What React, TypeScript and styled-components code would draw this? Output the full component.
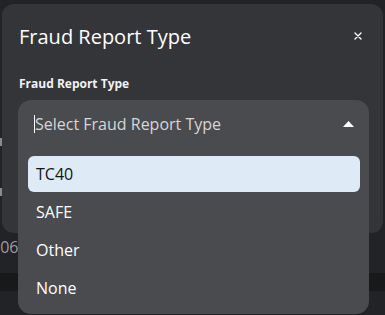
import styled, { createGlobalStyle } from 'styled-components'

const GlobalStyle = createGlobalStyle`
  html, body {
    margin: 0;
    padding: 0;
    background: #222326;
  }
  * { box-sizing: border-box; }
`

// ==================== 背景页面 ====================

const Page = styled.div`
  position: relative;
  width: 385px;
  height: 315px;
  overflow: hidden;
  background: #222326;
  font-family: 'Open Sans', 'Noto Sans', sans-serif;
`

const Behind = styled.div`
  display: flex;
  flex-direction: column;
  height: 100%;
  padding-top: 138px;
`

const EdgeMark = styled.div`
  width: 2px;
  height: 8px;
  background: #8a8b8e;
  margin-bottom: 42px;
`

const BehindText = styled.div`
  margin-left: -9px;
  font-size: 16px;
  line-height: 18px;
  color: #9c9da0;
`

const DarkBand = styled.div`
  margin-top: 17px;
  height: 18px;
  background: #18191b;
`

// ==================== 弹窗 ====================

const Modal = styled.div`
  position: absolute;
  left: 2px;
  top: 4px;
  width: 381px;
  height: 229px;
  background: #343539;
  border-radius: 12px;
  padding: 17px 17px 0 17px;
  display: flex;
  flex-direction: column;
`

const Header = styled.div`
  display: flex;
  align-items: center;
  justify-content: space-between;
  height: 30px;
`

const Title = styled.h2`
  margin: 0;
  font-size: 20px;
  font-weight: 400;
  color: #ffffff;
`

const CloseBtn = styled.button`
  border: none;
  background: none;
  padding: 0;
  margin-right: 3px;
  width: 10px;
  height: 10px;
  display: flex;
  align-items: center;
  justify-content: center;
  cursor: pointer;
`

const Label = styled.div`
  margin-top: 25px;
  font-size: 12px;
  font-weight: 700;
  color: #f2f2f2;
  line-height: 16px;
`

const Field = styled.div`
  position: relative;
  margin-top: 8px;
  margin-left: -1px;
  width: 351px;
`

const Panel = styled.div`
  position: absolute;
  top: 0;
  left: 0;
  width: 351px;
  height: 214px;
  background: #4a4b4f;
  border-radius: 13px;
  display: flex;
  flex-direction: column;
`

const Trigger = styled.div`
  height: 48px;
  display: flex;
  align-items: center;
  justify-content: space-between;
  padding: 0 15px 0 16px;
`

const Placeholder = styled.span`
  font-size: 16px;
  color: #d6d6d8;
  border-left: 1px solid #ffffff;
  line-height: 18px;
`

const Options = styled.ul`
  list-style: none;
  margin: 8px 0 0;
  padding: 0 9px 0 10px;
  display: flex;
  flex-direction: column;
  gap: 2px;
`

const Option = styled.li<{ $active?: boolean }>`
  height: 36px;
  display: flex;
  align-items: center;
  padding-left: 8px;
  border-radius: 6px;
  font-size: 16px;
  color: ${p => (p.$active ? '#141414' : '#ffffff')};
  background: ${p => (p.$active ? '#deeaf5' : 'transparent')};
`

const options = ['TC40', 'SAFE', 'Other', 'None']

export default function App() {
  return (
    <Page>
      <GlobalStyle />
      <Behind>
        <EdgeMark />
        <EdgeMark />
        <BehindText>506</BehindText>
        <DarkBand />
      </Behind>

      <Modal>
        <Header>
          <Title>Fraud Report Type</Title>
          <CloseBtn aria-label="close">
            <svg width="8" height="8" viewBox="0 0 8 8">
              <path d="M1 1L7 7M7 1L1 7" stroke="#ffffff" strokeWidth="1.4" strokeLinecap="round" />
            </svg>
          </CloseBtn>
        </Header>

        <Label>Fraud Report Type</Label>

        <Field>
          <Panel>
            <Trigger>
              <Placeholder>Select Fraud Report Type</Placeholder>
              <svg width="11" height="6" viewBox="0 0 11 6">
                <path d="M0 6L5.5 0L11 6Z" fill="#ffffff" />
              </svg>
            </Trigger>
            <Options>
              {options.map((o, i) => (
                <Option key={o} $active={i === 0}>{o}</Option>
              ))}
            </Options>
          </Panel>
        </Field>
      </Modal>
    </Page>
  )
}
